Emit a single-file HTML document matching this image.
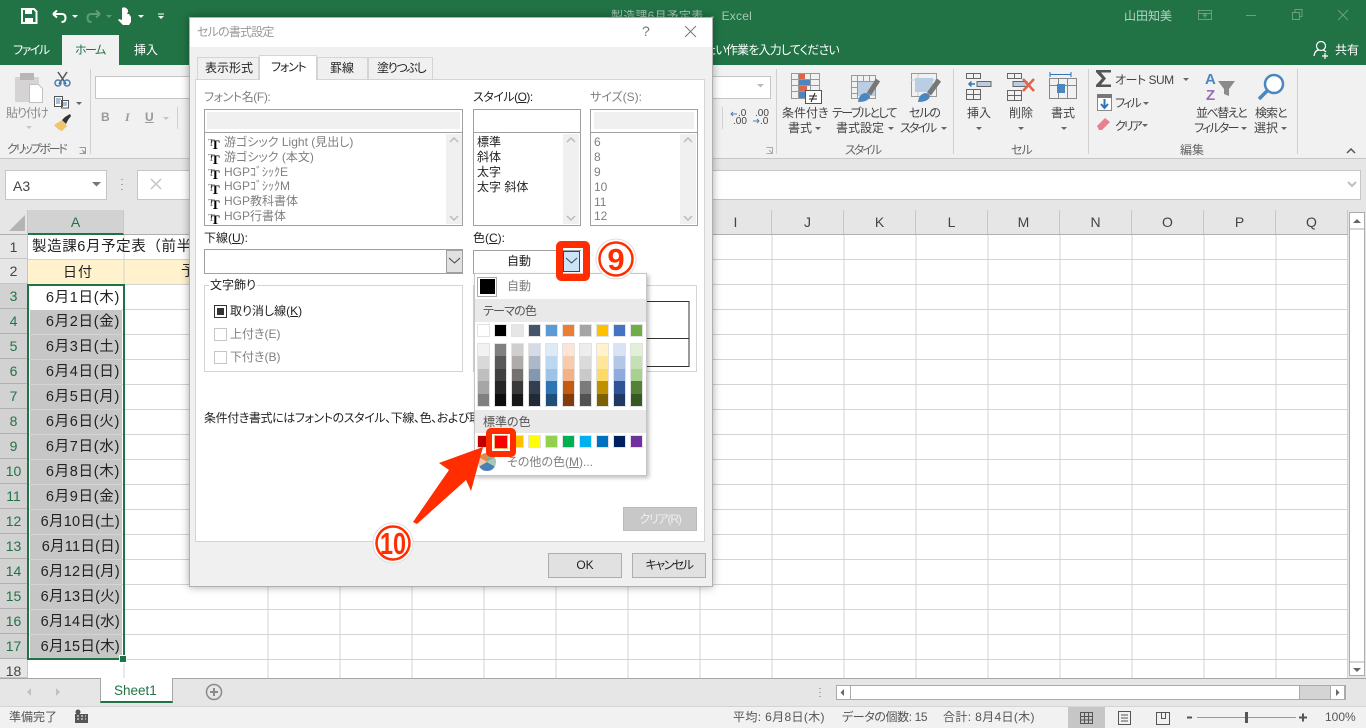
<!DOCTYPE html>
<html lang="ja"><head><meta charset="utf-8"><title>Excel</title>
<style>
*{box-sizing:border-box}
html,body{margin:0;padding:0;width:1366px;height:728px;overflow:hidden;background:#fff}
body{position:relative;font-family:"Liberation Sans","Noto Sans CJK JP",sans-serif;font-size:12px;color:#444;font-feature-settings:"palt"}
.a{position:absolute}
.t{position:absolute;white-space:nowrap;line-height:16px;height:16px}
.r{position:absolute;left:0;width:28px;text-align:center;font-size:14px;line-height:25px;height:25px;color:#444;border-bottom:1px solid #c6c6c6;background:#e6e6e6;border-right:1px solid #c6c6c6}
.s{background:#d2d2d2;color:#217346;border-bottom-color:#b0b0b0}
.h{position:absolute;top:210px;height:24px;width:72px;text-align:center;line-height:24px;font-size:14px;color:#444;border-right:1px solid #c6c6c6}
.d{position:absolute;left:30px;width:92px;height:24px;background:#c6c6c6;text-align:right;padding-right:2px;font-size:14.5px;line-height:25px;color:#222;letter-spacing:.7px;font-feature-settings:normal}
.w{letter-spacing:.25px}
.g{color:#808080}
.k{color:#222}
.bx{position:absolute;border:1px solid #a0a0a0;background:#fff}
.gi{position:absolute;background:#f0f0f0}
.sb{position:absolute;background:#f0f0f0;width:16px}
u{text-decoration:underline}
.sw{position:absolute;width:13px;height:13px;border:1px solid #e2e2e2}
.col{position:absolute;width:13px;top:343px;height:64px;border:1px solid #e2e2e2;display:flex;flex-direction:column}
.col i{display:block;flex:1}
.n{font-size:10px;line-height:9px;height:9px;color:#444}
</style></head><body>

<!-- title + tabs -->
<div class="a" style="left:0;top:0;width:1366px;height:65px;background:#217346"></div>
<div class="a" style="left:62px;top:35px;width:57px;height:30px;background:#f1f1f1"></div>
<div class="t" style="left:13px;top:42px;color:#fff;letter-spacing:-1.5px">ファイル</div>
<div class="t" style="left:75px;top:42px;color:#217346;letter-spacing:-1.5px">ホーム</div>
<div class="t" style="left:134px;top:42px;color:#fff">挿入</div>
<div class="t" style="left:713px;top:42px;color:#fff;width:126px;overflow:hidden;direction:rtl;letter-spacing:-.8px"><bdi>たい作業を入力してください</bdi></div>
<div class="t" style="left:1335px;top:42px;color:#fff;font-size:12px">共有</div>
<div class="t" style="left:611px;top:8px;color:#a7c7b4;letter-spacing:.2px">製造課6月予定表&nbsp; -&nbsp; Excel</div>
<div class="t" style="left:1124px;top:8px;color:#b9d4c5">山田知美</div>

<!-- ribbon -->
<div class="a" style="left:0;top:65px;width:1366px;height:94px;background:#f1f1f1;border-bottom:1px solid #c6c6c6"></div>
<div class="a" style="left:95px;top:76px;width:676px;height:23px;background:#fff;border:1px solid #c6c6c6"></div>
<div class="t" style="left:6px;top:105px;color:#8a8a8a;letter-spacing:-1px">貼り付け</div>
<div class="t" style="left:7px;top:141px;color:#666;letter-spacing:-2.2px">クリップボード</div>
<div class="t" style="left:101px;top:109px;color:#999;font-weight:bold">B</div>
<div class="t" style="left:125px;top:109px;color:#999;font-style:italic;font-family:'Liberation Serif',serif;font-weight:bold">I</div>
<div class="t" style="left:145px;top:109px;color:#999;font-weight:bold"><u>U</u></div>
<div class="t" style="left:782px;top:105px">条件付き</div>
<div class="t" style="left:788px;top:120px">書式</div>
<div class="t" style="left:832px;top:105px;letter-spacing:-1.6px">テーブルとして</div>
<div class="t" style="left:836px;top:120px">書式設定</div>
<div class="t" style="left:909px;top:105px;letter-spacing:-1.2px">セルの</div>
<div class="t" style="left:900px;top:120px;letter-spacing:-2px">スタイル</div>
<div class="t" style="left:845px;top:142px;color:#666;letter-spacing:-2px">スタイル</div>
<div class="t" style="left:967px;top:105px">挿入</div>
<div class="t" style="left:1009px;top:105px">削除</div>
<div class="t" style="left:1051px;top:105px">書式</div>
<div class="t" style="left:1011px;top:142px;color:#666;letter-spacing:-1px">セル</div>
<div class="t" style="left:1180px;top:142px;color:#666">編集</div>
<div class="t" style="left:1115px;top:72px;letter-spacing:-.5px">オート SUM</div>
<div class="t" style="left:1115px;top:95px;letter-spacing:-1.8px">フィル</div>
<div class="t" style="left:1115px;top:118px;letter-spacing:-2px">クリア</div>
<div class="t" style="left:1196px;top:105px;letter-spacing:-1.5px">並べ替えと</div>
<div class="t" style="left:1194px;top:120px;letter-spacing:-1.8px">フィルター</div>
<div class="t" style="left:1255px;top:105px;letter-spacing:-1px">検索と</div>
<div class="t" style="left:1254px;top:120px">選択</div>
<div class="t n" style="left:738px;top:109px">.0</div>
<div class="t n" style="left:733px;top:117px">.00</div>
<div class="t n" style="left:755px;top:109px">.00</div>
<div class="t n" style="left:760px;top:117px">.0</div>

<!-- formula bar -->
<div class="a" style="left:0;top:159px;width:1366px;height:51px;background:#e6e6e6"></div>
<div class="a" style="left:5px;top:170px;width:102px;height:30px;background:#fff;border:1px solid #c6c6c6"></div>
<div class="t" style="left:13px;top:178px;font-size:14px;color:#444">A3</div>
<div class="a" style="left:137px;top:170px;width:1224px;height:30px;background:#fff;border:1px solid #c6c6c6"></div>

<!-- column headers -->
<div class="a" style="left:0;top:210px;width:1348px;height:25px;background:#e6e6e6;border-bottom:1px solid #b0b0b0"></div>
<div class="a" style="left:0;top:210px;width:28px;height:25px;border-right:1px solid #c6c6c6"></div>
<div class="h" style="left:28px;width:96px;background:#d2d2d2;color:#217346;height:25px;border-bottom:2px solid #217346">A</div>
<div class="h" style="left:700px">I</div><div class="h" style="left:772px">J</div><div class="h" style="left:844px">K</div><div class="h" style="left:916px">L</div><div class="h" style="left:988px">M</div><div class="h" style="left:1060px">N</div><div class="h" style="left:1132px">O</div><div class="h" style="left:1204px">P</div><div class="h" style="left:1276px">Q</div>

<!-- row 2 fill -->
<div class="a" style="left:28px;top:259px;width:240px;height:25px;background:#fff2cc"></div>

<!-- grid -->
<svg class="a" style="left:0;top:0" width="1366" height="728">
<path d="M124 235V678M268 235V678M340 235V678M412 235V678M484 235V678M556 235V678M628 235V678M700 235V678M772 235V678M844 235V678M916 235V678M988 235V678M1060 235V678M1132 235V678M1204 235V678M1276 235V678M1347.500 235V678" stroke="#d4d4d4" fill="none"/>
<path d="M28 259.500H1348M28 284.500H1348M28 309.500H1348M28 334.500H1348M28 359.500H1348M28 384.500H1348M28 409.500H1348M28 434.500H1348M28 459.500H1348M28 484.500H1348M28 509.500H1348M28 534.500H1348M28 559.500H1348M28 584.500H1348M28 609.500H1348M28 634.500H1348M28 659.500H1348" stroke="#d4d4d4" fill="none"/>
</svg>

<!-- rows -->
<div class="r" style="top:235px;height:24px;line-height:24px">1</div><div class="r" style="top:259px">2</div>
<div class="r s" style="top:284px">3</div><div class="r s" style="top:309px">4</div><div class="r s" style="top:334px">5</div><div class="r s" style="top:359px">6</div><div class="r s" style="top:384px">7</div><div class="r s" style="top:409px">8</div><div class="r s" style="top:434px">9</div><div class="r s" style="top:459px">10</div><div class="r s" style="top:484px">11</div><div class="r s" style="top:509px">12</div><div class="r s" style="top:534px">13</div><div class="r s" style="top:559px">14</div><div class="r s" style="top:584px">15</div><div class="r s" style="top:609px">16</div><div class="r s" style="top:634px">17</div>
<div class="r" style="top:659px;height:19px">18</div>

<div class="t" style="left:32px;top:239px;font-size:14.5px;color:#222;letter-spacing:.6px;font-feature-settings:normal">製造課6月予定表（前半</div>
<div class="t" style="left:63px;top:264px;font-size:14px;color:#222;letter-spacing:1px">日付</div>
<div class="t" style="left:181px;top:264px;font-size:14.5px;color:#222">予</div>

<div class="d" style="top:286px;background:#fff">6月1日(木)</div>
<div class="d" style="top:310px">6月2日(金)</div><div class="d" style="top:335px">6月3日(土)</div><div class="d" style="top:360px">6月4日(日)</div><div class="d" style="top:385px">6月5日(月)</div><div class="d" style="top:410px">6月6日(火)</div><div class="d" style="top:435px">6月7日(水)</div><div class="d" style="top:460px">6月8日(木)</div><div class="d" style="top:485px">6月9日(金)</div><div class="d w" style="top:510px">6月10日(土)</div><div class="d w" style="top:535px">6月11日(日)</div><div class="d w" style="top:560px">6月12日(月)</div><div class="d w" style="top:585px">6月13日(火)</div><div class="d w" style="top:610px">6月14日(水)</div><div class="d w" style="top:635px">6月15日(木)</div>
<div class="a" style="left:27px;top:284px;width:98px;height:376px;border:2px solid #217346"></div>
<div class="a" style="left:120px;top:656px;width:6px;height:6px;background:#217346;outline:1px solid #fff"></div>

<!-- vertical scrollbar -->
<div class="a" style="left:1348px;top:210px;width:18px;height:469px;background:#e6e6e6"></div>
<div class="a" style="left:1349px;top:212px;width:16px;height:464px;background:#fff;border:1px solid #ababab"></div>

<!-- sheet tabs -->
<div class="a" style="left:0;top:678px;width:1366px;height:28px;background:#e6e6e6;border-top:1px solid #a6a6a6"></div>
<div class="a" style="left:100px;top:678px;width:73px;height:25px;background:#fff;border:1px solid #a6a6a6;border-top-color:#fff;border-bottom:2px solid #217346;border-top:0"></div>
<div class="t" style="left:114px;top:683px;font-size:13.5px;color:#217346">Sheet1</div>
<div class="a" style="left:836px;top:685px;width:510px;height:15px;background:#d4d4d4;border:1px solid #ababab"></div>
<div class="a" style="left:836px;top:685px;width:464px;height:15px;background:#fff;border:1px solid #ababab"></div>
<div class="a" style="left:1330px;top:685px;width:15px;height:15px;background:#fff;border:1px solid #ababab"></div>

<!-- status bar -->
<div class="a" style="left:0;top:706px;width:1366px;height:22px;background:#f1f1f1;border-top:1px solid #d4d4d4"></div>
<div class="t" style="left:9px;top:709px;color:#555">準備完了</div>
<div class="t" style="left:733px;top:709px;color:#555;letter-spacing:.35px">平均: 6月8日(木)</div>
<div class="t" style="left:842px;top:709px;color:#555;letter-spacing:-.4px">データの個数: 15</div>
<div class="t" style="left:943px;top:709px;color:#555;letter-spacing:.35px">合計: 8月4日(木)</div>
<div class="a" style="left:1068px;top:707px;width:37px;height:21px;background:#c6c6c6"></div>
<div class="t" style="left:1325px;top:709px;color:#555">100%</div>

<!-- icons under dialog -->
<svg class="a" style="left:0;top:0" width="1366" height="728" fill="none">
<!-- QAT -->
<path d="M22 9h12l2.500 2.500V23H22z" stroke="#fff" stroke-width="2"/><path d="M25 10h7v4h-7zM25 18h8v5h-8z" fill="#fff"/>
<path d="M53 14l4-3.500M53 14l4 3.500M53 14h9q3.500 0 3.500 4t-4 4" stroke="#fff" stroke-width="2"/><path d="M72 15h6l-3 3z" fill="#fff"/>
<path d="M100 14l-4-3.500M100 14l-4 3.500M100 14h-9q-3.500 0-3.500 4t4 4" stroke="#5f9c7c" stroke-width="2"/><path d="M106 15h6l-3 3z" fill="#5f9c7c"/>
<path d="M122 8a4 4 0 0 1 6 4l-1 2h2l2 3v5l-2 3h-6l-5-5 1-1 3 1V10" fill="#fff"/><path d="M138 15h6l-3 3z" fill="#fff"/>
<path d="M158 14h6" stroke="#fff" stroke-width="1"/><path d="M158 16h6l-3 3z" fill="#fff"/>
<!-- title buttons -->
<path d="M1198.500 10.500h13v9h-13zM1198.500 13.500h13M1205 18v-4M1203 16l2-2 2 2" stroke="#6b9f84"/>
<path d="M1246 15.500h10" stroke="#6b9f84"/>
<path d="M1292.500 12.500h7v7h-7zM1295 12v-2.500h7v7h-2.500" stroke="#6b9f84"/>
<path d="M1338 10l10 10M1348 10l-10 10" stroke="#6b9f84"/>
<!-- share -->
<circle cx="1321" cy="46" r="4.500" stroke="#fff" stroke-width="1.200"/><path d="M1314 56q1-6 5-6M1323 50q2 .5 3 2M1325 53v6M1322 56h6" stroke="#fff" stroke-width="1.200"/>
<!-- clipboard -->
<rect x="15" y="77" width="24" height="25" rx="1" fill="#d5d3d3"/><rect x="20" y="73" width="14" height="7" fill="#b8b6b6"/>
<path d="M29.500 84.500h9l4 4v14h-13z" fill="#fff" stroke="#c0c0c0"/>
<path d="M26 126h6l-3 3z" fill="#c6c6c6"/>
<path d="M58 72l8 12M67 72l-8 12" stroke="#555" stroke-width="1.500"/><circle cx="58" cy="83" r="3" stroke="#4a7fb5" stroke-width="1.500"/><circle cx="67" cy="83" r="3" stroke="#4a7fb5" stroke-width="1.500"/>
<path d="M54.500 96.500h8v10h-8zM61.500 100.500h7v7.500h-7z" fill="#fff" stroke="#555"/><path d="M56 99h5M56 101h4M56 103h4M63 103h4M63 105h4" stroke="#4a7fb5"/><path d="M76 102h6l-3 3z" fill="#666"/>
<path d="M54 125l8-5 5 6-5 5q-4-1-8-6z" fill="#f2c46d"/><path d="M62 120l3-3 5-3 1 2-3 4-2 4z" fill="#333"/>
<path d="M79.500 147.500h6v6h-6M82 150l3 3M85 151v2h-2" stroke="#999"/>
<path d="M90.500 69v85M776.500 69v85M953.500 69v85M1088.500 69v85M1297.500 69v85" stroke="#d0d0d0"/>
<path d="M177.500 107v22M722.500 107v22" stroke="#d0d0d0"/>
<path d="M163 117h6l-3 3z" fill="#c6c6c6"/><path d="M757 84h7l-3.500 3.500z" fill="#bbb"/>
<path d="M737 114h-6m2-2l-2 2 2 2" stroke="#4a7fb5"/><path d="M753 121h6m-2-2l2 2-2 2" stroke="#4a7fb5"/>
<path d="M766.500 147.500h6v6h-6M769 150l3 3" stroke="#aaa"/>
<!-- conditional -->
<path d="M791.500 73.500h28v25h-28zM791.500 79.500h28M791.500 85.500h28M791.500 91.500h28M798.500 73.500v25M810.500 73.500v25" stroke="#999"/>
<path d="M799 74h6v5h-6zM799 86h8v5h-8z" fill="#df6547"/><path d="M799 80h11v5h-11zM799 92h6v6h-6z" fill="#4a86c0"/>
<rect x="805.500" y="90.500" width="16" height="13" fill="#fff" stroke="#555"/><path d="M809 96h8M809 99h8M815 93l-4 9" stroke="#222"/>
<path d="M815 127h6l-3 3z" fill="#666"/>
<!-- table -->
<path d="M851.500 75.500h24v23h-24zM851.500 81.500h24M851.500 87.500h24M851.500 93.500h24M857.500 75.500v23M863.500 75.500v23M869.500 75.500v23" stroke="#999"/><rect x="858" y="82" width="17" height="14" fill="#b9cde3"/>
<path d="M878 80l-9 14" stroke="#777" stroke-width="5"/><path d="M858 102q1-8 7-9 4 0 5 3-1 6-12 6z" fill="#4a86c0"/>
<path d="M888 127h6l-3 3z" fill="#666"/>
<!-- cell style -->
<path d="M911.500 73.500h25v23h-25z" stroke="#999"/><path d="M911 80h26M918 74v22" stroke="#ccc"/><rect x="915" y="78" width="18" height="14" fill="#b9cde3"/>
<path d="M939 80l-10 14" stroke="#777" stroke-width="5"/><path d="M918 102q1-8 7-9 4 0 5 3-1 6-12 6z" fill="#4a86c0"/>
<path d="M941 127h6l-3 3z" fill="#666"/>
<!-- insert -->
<path d="M966.500 73.500h14v5h-14zM973.500 73.500v5M966.500 89.500h14v10h-14zM966.500 94.500h14M973.500 89.500v10" stroke="#666"/><path d="M977 81.500h14v5h-14z" fill="#b9cde3" stroke="#666"/><path d="M975 84h-6m2.500-2.500l-2.500 2.500 2.500 2.500" stroke="#2f75b5" stroke-width="1.500"/>
<path d="M976 127h6l-3 3z" fill="#666"/>
<!-- delete -->
<path d="M1007.500 73.500h14v5h-14zM1014.500 73.500v5M1007.500 90.500h14v10h-14zM1007.500 95.500h14M1014.500 90.500v10" stroke="#666"/><path d="M1013 81.500h14v5h-14z" fill="#b9cde3" stroke="#666"/><path d="M1023 79l11 12M1034 79l-11 12" stroke="#e0654a" stroke-width="2.500"/>
<path d="M1018 127h6l-3 3z" fill="#666"/>
<!-- format -->
<path d="M1050 74.500h21M1050 72v5M1071 72v5" stroke="#2f75b5"/><path d="M1049.500 78.500h27v20h-27zM1049.500 85.500h27M1058.500 78.500v20M1067.500 78.500v20" stroke="#888"/><rect x="1057" y="84" width="8" height="9" fill="#4a86c0"/>
<path d="M1061 127h6l-3 3z" fill="#666"/>
<!-- edit -->
<path d="M1096 70h15v2.500h-10l5 6-5 6h10v2.500h-15v-2l6-6.500-6-6.500z" fill="#555"/>
<path d="M1183 78h6l-3 3z" fill="#666"/>
<rect x="1097.500" y="94.500" width="14" height="16" fill="#fff" stroke="#888"/><rect x="1097" y="94" width="15" height="4" fill="#777"/><path d="M1104.500 99v8m-3.500-3l3.500 4 3.500-4" stroke="#2f75b5" stroke-width="2"/>
<path d="M1143 102h6l-3 3z" fill="#666"/>
<path d="M1097 126l8-8 5 4-8 8h-3z" fill="#e8808f"/>
<path d="M1142 124h6l-3 3z" fill="#666"/>
<path d="M1218 81h17l-6 8v7l-5-2v-5z" fill="#8a8a8a"/>
<circle cx="1274" cy="84" r="9" fill="#fff" stroke="#4a86c0" stroke-width="2.500"/><path d="M1267 91l-8 8" stroke="#4a86c0" stroke-width="3.500"/>
<path d="M1241 127h6l-3 3zM1281 127h6l-3 3z" fill="#666"/>
<path d="M1347 153l4-4 4 4" stroke="#555" stroke-width="1.500"/>
<!-- formula bar marks -->
<path d="M92 182h9l-4.500 4.500z" fill="#777"/>
<path d="M122 179v1M122 184v1M122 189v1" stroke="#aaa" stroke-width="2"/>
<path d="M151 179l10 10M161 179l-10 10" stroke="#c6c6c6" stroke-width="1.500"/>
<path d="M1348 182l4 4 4-4" stroke="#c0c0c0" stroke-width="2"/>
<!-- corner -->
<path d="M25 215v16H9z" fill="#b4b4b4"/>
<!-- v scroll buttons -->
<path d="M1349.500 229h15M1349.500 662h15" stroke="#ababab"/><path d="M1353 223l4-4 4 4zM1353 668l4 4 4-4z" fill="#666"/>
<!-- sheet nav -->
<path d="M31 688v8l-4-4zM56 688v8l4-4z" fill="#c0c0c0"/>
<circle cx="214" cy="692" r="7.500" stroke="#8a8a8a" stroke-width="1.500"/><path d="M210 692h8M214 688v8" stroke="#8a8a8a" stroke-width="2"/>
<path d="M820 688v1M820 692v1M820 696v1" stroke="#aaa" stroke-width="2"/>
<path d="M844 689v7l-3.500-3.500zM1336 689v7l3.500-3.500z" fill="#666"/><path d="M850.500 686v13" stroke="#ababab"/>
<!-- status icons -->
<circle cx="78" cy="712" r="2.500" fill="#555"/><path d="M75 714h13v9h-13z" fill="#555"/><path d="M77 716h2M81 716h2M85 716h1M77 719h2M81 719h2M85 719h1" stroke="#fff"/>
<path d="M1080.500 712.500h12v11h-12zM1080.500 716.500h12M1080.500 720h12M1084.500 712.500v11M1088.500 712.500v11" stroke="#555"/>
<path d="M1118.500 711.500h12v13h-12zM1121 715h7M1121 718h7M1121 721h7" stroke="#555"/>
<path d="M1156.500 712.500h13v12h-13zM1161.500 712.500v6h4v-6" stroke="#555"/>
<path d="M1187 717.500h5" stroke="#555" stroke-width="2"/><path d="M1197 717.500h99" stroke="#999"/><rect x="1245" y="712" width="3" height="11" fill="#555"/><path d="M1299 717.500h8M1303 713.500v8" stroke="#555" stroke-width="2"/>
</svg>

<!-- dialog -->
<div class="a" style="left:189px;top:17px;width:524px;height:570px;background:#f0f0f0;border:1px solid #b0b0b0;box-shadow:0 0 8px rgba(0,0,0,.35)"></div>
<div class="a" style="left:190px;top:18px;width:522px;height:29px;background:#fff"></div>
<div class="t" style="left:197px;top:24px;color:#999;letter-spacing:-.8px">セルの書式設定</div>
<div class="t" style="left:642px;top:23px;color:#777;font-size:14px">?</div>
<svg class="a" style="left:684px;top:25px" width="13" height="13"><path d="M1 1l11 11M12 1L1 12" stroke="#777" fill="none"/></svg>

<div class="a" style="left:195px;top:79px;width:510px;height:463px;background:#fff;border:1px solid #d4d4d4"></div>
<div class="a" style="left:197px;top:57px;width:62px;height:23px;background:#f0f0f0;border:1px solid #d4d4d4"></div>
<div class="a" style="left:317px;top:57px;width:51px;height:23px;background:#f0f0f0;border:1px solid #d4d4d4"></div>
<div class="a" style="left:368px;top:57px;width:65px;height:23px;background:#f0f0f0;border:1px solid #d4d4d4"></div>
<div class="a" style="left:259px;top:55px;width:58px;height:25px;background:#fff;border:1px solid #d4d4d4;border-bottom:0"></div>
<div class="t k" style="left:205px;top:60px">表示形式</div>
<div class="t k" style="left:271px;top:59px;letter-spacing:-1.2px">フォント</div>
<div class="t k" style="left:330px;top:60px">罫線</div>
<div class="t k" style="left:377px;top:60px;letter-spacing:-1.3px">塗りつぶし</div>

<div class="t g" style="left:204px;top:89px;letter-spacing:-.4px">フォント名(F):</div>
<div class="bx" style="left:204px;top:109px;width:259px;height:24px"></div><div class="gi" style="left:207px;top:112px;width:253px;height:17px"></div>
<div class="bx" style="left:204px;top:132px;width:259px;height:94px"></div>
<div class="sb" style="left:446px;top:134px;height:90px"></div>
<div class="t g" style="left:224px;top:134px">游ゴシック Light (見出し)</div>
<div class="t g" style="left:224px;top:149px">游ゴシック (本文)</div>
<div class="t g" style="left:224px;top:164px">HGPｺﾞｼｯｸE</div>
<div class="t g" style="left:224px;top:178px">HGPｺﾞｼｯｸM</div>
<div class="t g" style="left:224px;top:193px">HGP教科書体</div>
<div class="t g" style="left:224px;top:208px">HGP行書体</div>
<div class="t" style="left:208px;top:135px;font-family:'Liberation Serif',serif;font-size:11px;color:#777">T</div><div class="t" style="left:211px;top:137px;font-family:'Liberation Serif',serif;font-size:13px;font-weight:bold;color:#000">T</div>
<div class="t" style="left:208px;top:150px;font-family:'Liberation Serif',serif;font-size:11px;color:#777">T</div><div class="t" style="left:211px;top:152px;font-family:'Liberation Serif',serif;font-size:13px;font-weight:bold;color:#000">T</div>
<div class="t" style="left:208px;top:165px;font-family:'Liberation Serif',serif;font-size:11px;color:#777">T</div><div class="t" style="left:211px;top:167px;font-family:'Liberation Serif',serif;font-size:13px;font-weight:bold;color:#000">T</div>
<div class="t" style="left:208px;top:180px;font-family:'Liberation Serif',serif;font-size:11px;color:#777">T</div><div class="t" style="left:211px;top:182px;font-family:'Liberation Serif',serif;font-size:13px;font-weight:bold;color:#000">T</div>
<div class="t" style="left:208px;top:195px;font-family:'Liberation Serif',serif;font-size:11px;color:#777">T</div><div class="t" style="left:211px;top:197px;font-family:'Liberation Serif',serif;font-size:13px;font-weight:bold;color:#000">T</div>
<div class="t" style="left:208px;top:210px;font-family:'Liberation Serif',serif;font-size:11px;color:#777">T</div><div class="t" style="left:211px;top:212px;font-family:'Liberation Serif',serif;font-size:13px;font-weight:bold;color:#000">T</div>

<div class="t k" style="left:473px;top:89px;letter-spacing:-.5px">スタイル(<u>O</u>):</div>
<div class="bx" style="left:473px;top:109px;width:108px;height:24px"></div>
<div class="bx" style="left:473px;top:132px;width:108px;height:94px"></div>
<div class="sb" style="left:563px;top:134px;height:90px"></div>
<div class="t k" style="left:477px;top:134px">標準</div><div class="t k" style="left:477px;top:149px">斜体</div><div class="t k" style="left:477px;top:164px">太字</div><div class="t k" style="left:477px;top:179px">太字 斜体</div>

<div class="t g" style="left:590px;top:89px">サイズ(S):</div>
<div class="bx" style="left:590px;top:109px;width:108px;height:24px"></div><div class="gi" style="left:594px;top:112px;width:100px;height:17px"></div>
<div class="bx" style="left:590px;top:132px;width:108px;height:94px"></div>
<div class="sb" style="left:680px;top:134px;height:90px"></div>
<div class="t g" style="left:594px;top:134px">6</div><div class="t g" style="left:594px;top:149px">8</div><div class="t g" style="left:594px;top:164px">9</div><div class="t g" style="left:594px;top:179px">10</div><div class="t g" style="left:594px;top:194px">11</div><div class="t g" style="left:594px;top:208px">12</div>

<div class="t k" style="left:204px;top:230px">下線(<u>U</u>):</div>
<div class="bx" style="left:204px;top:249px;width:259px;height:25px"></div>
<div class="a" style="left:446px;top:250px;width:17px;height:23px;background:#e1e1e1;border:1px solid #a0a0a0"></div>
<div class="t k" style="left:473px;top:230px">色(<u>C</u>):</div>
<div class="a" style="left:473px;top:250px;width:108px;height:24px;background:#fff;border-top:1px solid #a0a0a0;border-left:1px solid #a0a0a0"></div>
<div class="t k" style="left:507px;top:253px">自動</div>
<div class="a" style="left:563px;top:251px;width:17px;height:21px;background:#cce4f7;border:1px solid #005499"></div>

<div class="a" style="left:204px;top:285px;width:259px;height:87px;border:1px solid #d4d4d4"></div>
<div class="t k" style="left:209px;top:277px;background:#fff;padding:0 1px">文字飾り</div>
<div class="a" style="left:214px;top:305px;width:13px;height:13px;border:1px solid #333;background:#fff"></div><div class="a" style="left:217px;top:308px;width:7px;height:7px;background:#333"></div>
<div class="t k" style="left:230px;top:303px">取り消し線(<u>K</u>)</div>
<div class="a" style="left:214px;top:328px;width:13px;height:13px;border:1px solid #c6c6c6"></div>
<div class="t g" style="left:230px;top:326px">上付き(E)</div>
<div class="a" style="left:214px;top:351px;width:13px;height:13px;border:1px solid #c6c6c6"></div>
<div class="t g" style="left:230px;top:349px">下付き(B)</div>
<div class="a" style="left:473px;top:285px;width:224px;height:87px;border:1px solid #d4d4d4"></div>
<svg class="a" style="left:0;top:0" width="1366" height="728" fill="none">
<path d="M640 301.500h49v65h-49M640 338.500h49" stroke="#333"/>
<path d="M449 258l5.500 5 5.500-5M566 258l5.500 5 5.500-5" stroke="#444"/>
<path d="M450 142l4-4 4 4M450 216l4 4 4-4M567 142l4-4 4 4M567 216l4 4 4-4M684 142l4-4 4 4M684 216l4 4 4-4" stroke="#bbb" stroke-width="1.500"/>
</svg>
<div class="t k" style="left:204px;top:410px;letter-spacing:-.4px">条件付き書式にはフォントのスタイル、下線、色、および取</div>

<div class="a" style="left:623px;top:507px;width:74px;height:24px;background:#c8c8c8;border:1px solid #bcbcbc;text-align:center;line-height:22px;color:#eee;letter-spacing:-1.2px">クリア(R)</div>
<div class="a" style="left:548px;top:553px;width:74px;height:25px;background:#e1e1e1;border:1px solid #adadad;text-align:center;line-height:23px;color:#222">OK</div>
<div class="a" style="left:632px;top:553px;width:74px;height:25px;background:#e1e1e1;border:1px solid #adadad;text-align:center;line-height:23px;color:#222;letter-spacing:-1.5px">キャンセル</div>

<!-- colour popup -->
<div class="a" style="left:474px;top:273px;width:173px;height:203px;background:#fff;border:1px solid #c6c6c6;box-shadow:2px 2px 4px rgba(0,0,0,.25)"></div>
<div class="a" style="left:477px;top:277px;width:20px;height:20px;border:1px solid #aaa;background:#fff"></div><div class="a" style="left:480px;top:279px;width:15px;height:15px;background:#000"></div>
<div class="t g" style="left:507px;top:278px">自動</div>
<div class="a" style="left:475px;top:299px;width:171px;height:23px;background:#e9e9e9"></div>
<div class="t" style="left:483px;top:303px;color:#555;letter-spacing:-.8px">テーマの色</div>
<div class="sw" style="left:477px;top:324px;background:#fff"></div><div class="sw" style="left:494px;top:324px;background:#000"></div><div class="sw" style="left:511px;top:324px;background:#e7e6e6"></div><div class="sw" style="left:528px;top:324px;background:#44546a"></div><div class="sw" style="left:545px;top:324px;background:#5b9bd5"></div><div class="sw" style="left:562px;top:324px;background:#ed7d31"></div><div class="sw" style="left:579px;top:324px;background:#a5a5a5"></div><div class="sw" style="left:596px;top:324px;background:#ffc000"></div><div class="sw" style="left:613px;top:324px;background:#4472c4"></div><div class="sw" style="left:630px;top:324px;background:#70ad47"></div>
<div class="col" style="left:477px"><i style="background:#f2f2f2"></i><i style="background:#d9d9d9"></i><i style="background:#bfbfbf"></i><i style="background:#a6a6a6"></i><i style="background:#808080"></i></div>
<div class="col" style="left:494px"><i style="background:#808080"></i><i style="background:#595959"></i><i style="background:#404040"></i><i style="background:#262626"></i><i style="background:#0d0d0d"></i></div>
<div class="col" style="left:511px"><i style="background:#d0cece"></i><i style="background:#afabab"></i><i style="background:#767171"></i><i style="background:#3b3838"></i><i style="background:#171717"></i></div>
<div class="col" style="left:528px"><i style="background:#d6dce5"></i><i style="background:#adb9ca"></i><i style="background:#8497b0"></i><i style="background:#333f50"></i><i style="background:#222a35"></i></div>
<div class="col" style="left:545px"><i style="background:#deebf7"></i><i style="background:#bdd7ee"></i><i style="background:#9dc3e6"></i><i style="background:#2e75b6"></i><i style="background:#1f4e79"></i></div>
<div class="col" style="left:562px"><i style="background:#fbe5d6"></i><i style="background:#f8cbad"></i><i style="background:#f4b183"></i><i style="background:#c55a11"></i><i style="background:#843c0c"></i></div>
<div class="col" style="left:579px"><i style="background:#ededed"></i><i style="background:#dbdbdb"></i><i style="background:#c9c9c9"></i><i style="background:#7b7b7b"></i><i style="background:#525252"></i></div>
<div class="col" style="left:596px"><i style="background:#fff2cc"></i><i style="background:#ffe699"></i><i style="background:#ffd966"></i><i style="background:#bf9000"></i><i style="background:#7f6000"></i></div>
<div class="col" style="left:613px"><i style="background:#dae3f3"></i><i style="background:#b4c7e7"></i><i style="background:#8faadc"></i><i style="background:#2f5597"></i><i style="background:#203864"></i></div>
<div class="col" style="left:630px"><i style="background:#e2f0d9"></i><i style="background:#c5e0b4"></i><i style="background:#a9d18e"></i><i style="background:#548235"></i><i style="background:#385723"></i></div>
<div class="a" style="left:475px;top:410px;width:171px;height:23px;background:#e9e9e9"></div>
<div class="t" style="left:483px;top:414px;color:#555">標準の色</div>
<div class="sw" style="left:477px;top:435px;background:#c00000"></div><div class="sw" style="left:494px;top:435px;background:#ff0000"></div><div class="sw" style="left:511px;top:435px;background:#ffc000"></div><div class="sw" style="left:528px;top:435px;background:#ffff00"></div><div class="sw" style="left:545px;top:435px;background:#92d050"></div><div class="sw" style="left:562px;top:435px;background:#00b050"></div><div class="sw" style="left:579px;top:435px;background:#00b0f0"></div><div class="sw" style="left:596px;top:435px;background:#0070c0"></div><div class="sw" style="left:613px;top:435px;background:#002060"></div><div class="sw" style="left:630px;top:435px;background:#7030a0"></div>
<div class="t g" style="left:507px;top:454px">その他の色(<u>M</u>)...</div>
<svg class="a" style="left:0;top:0" width="1366" height="728">
<path d="M487 462l0-9a9 9 0 0 1 7.800 4.500z" fill="#7fae9a"/><path d="M487 462l-7.800-4.500a9 9 0 0 1 7.800-4.500z" fill="#e08a4a"/><path d="M487 462l-7.800-4.500a9 9 0 0 0 0 9z" fill="#f3c9a8"/><path d="M487 462l-7.800 4.500a9 9 0 0 0 15.600 0z" fill="#4a7fb5"/><path d="M487 462l7.800-4.500a9 9 0 0 1 0 9z" fill="#a8c8b5"/>
<!-- annotations -->
<rect x="559.500" y="244.500" width="27" height="33" rx="2" fill="none" stroke="#ff2d00" stroke-width="7"/>
<rect x="489" y="431" width="24" height="23" rx="2" fill="#fff" stroke="#ff2d00" stroke-width="6"/>
<rect x="494.500" y="435.500" width="13" height="13" fill="#ff0000" stroke="#f5b26b"/>
<polygon points="483,447 439,463 449,470 413,522 417,524 466,480 471,491" fill="#ff2d00"/>
<circle cx="616" cy="259" r="20" fill="#fff" stroke="#ddd" stroke-width="1"/><circle cx="616" cy="259" r="16.500" fill="#fff" stroke="#ff2d00" stroke-width="2.500"/>
<text x="616" y="270" font-family="Liberation Sans" font-size="31" font-weight="bold" fill="#ff2d00" text-anchor="middle">9</text>
<circle cx="393" cy="543" r="20" fill="#fff" stroke="#ddd" stroke-width="1"/><circle cx="393" cy="543" r="16.500" fill="#fff" stroke="#ff2d00" stroke-width="2.500"/>
<text x="393" y="554" font-family="Liberation Sans" font-size="31" font-weight="bold" fill="#ff2d00" text-anchor="middle" textLength="26" lengthAdjust="spacingAndGlyphs">10</text>
</svg>

<!-- A, Z sort letters -->
<div class="t" style="left:1205px;top:72px;color:#4a86c0;font-weight:bold;font-size:15px">A</div>
<div class="t" style="left:1206px;top:88px;color:#9a6dbb;font-weight:bold;font-size:15px">Z</div>
</body></html>
